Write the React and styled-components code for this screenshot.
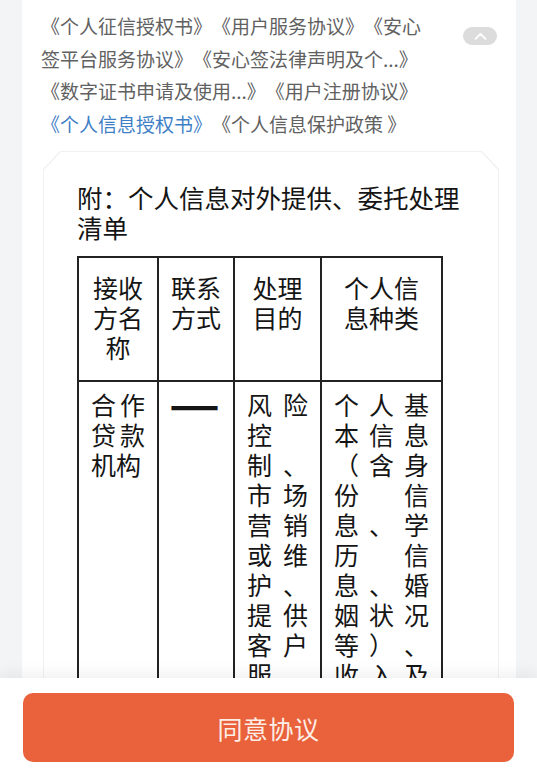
import React from 'react';
import styled, { createGlobalStyle } from 'styled-components';

const GlobalStyle = createGlobalStyle`
  html, body { margin: 0; padding: 0; height: 100%; }
  body {
    background: #f3f4f6;
    font-family: "Noto Sans CJK SC", "Noto Sans", sans-serif;
    overflow: hidden;
    text-spacing-trim: space-all;
  }
  #root { height: 100%; }
`;

const Page = styled.div`
  height: 100vh;
  display: flex;
  flex-direction: column;
`;

const Scroll = styled.main`
  flex: 1;
  min-height: 0;
  overflow: hidden;
  padding: 0 21px 0 22px;
`;

const Card = styled.section`
  background: #fff;
  min-height: 100%;
  box-sizing: border-box;
  padding: 10px 17px 0 19px;
`;

const TopRow = styled.div`
  display: flex;
  justify-content: space-between;
  align-items: flex-start;
  padding-right: 2px;
`;

const LinkText = styled.p`
  margin: 0;
  width: 392px;
  font-size: 19px;
  line-height: 32.5px;
  color: #616161;
  text-spacing-trim: space-all;
`;

const DocLink = styled.span`
  color: ${p => (p.$active ? '#3f7fc6' : '#616161')};
  cursor: pointer;
`;

const CollapseButton = styled.button`
  margin-top: 17px;
  width: 34px;
  height: 18px;
  border: none;
  border-radius: 9px;
  background: #dcdcdc;
  display: flex;
  align-items: center;
  justify-content: center;
  padding: 0;
  cursor: pointer;
`;

const chamfer = `polygon(17px 0, calc(100% - 17px) 0, 100% 18px, 100% 100%, 0 100%, 0 18px)`;

const Frame = styled.div`
  margin: 11px 0 0 2px;
  background: #f1f1f1;
  padding: 1px 1px 0 1px;
  clip-path: ${chamfer};
`;

const FrameInner = styled.div`
  background: #fff;
  clip-path: ${chamfer};
  padding: 30px 33px 40px 33px;
`;

const Title = styled.h2`
  margin: 0 0 15px 0;
  font-size: 25.5px;
  line-height: 29.5px;
  font-weight: 400;
  color: #151515;
`;

const Table = styled.table`
  width: 364px;
  table-layout: fixed;
  border-collapse: collapse;
  color: #151515;
`;

const Col = styled.col`
  width: ${p => p.$w}px;
`;

const HeadCell = styled.th`
  border: 2px solid #222;
  font-weight: 400;
  font-size: 25px;
  line-height: 30px;
  text-align: center;
  vertical-align: top;
  padding: 14px 12px 18px;
`;

const BodyCell = styled.td`
  border: 2px solid #222;
  font-size: 25px;
  line-height: 30px;
  text-align: justify;
  vertical-align: top;
  padding: 7px 12px 20px;
  text-spacing-trim: space-all;
`;

const Dash = styled.span`
  display: inline-block;
  font-weight: 700;
  transform: translate(-1px, -3px) scale(1.15, 1.8);
  transform-origin: left center;
`;

const Footer = styled.footer`
  position: relative;
  z-index: 1;
  background: #fff;
  padding: 15px 23px 8px;
  box-shadow: 0 -5px 14px rgba(0, 0, 0, 0.06);
`;

const AgreeButton = styled.button`
  width: 100%;
  height: 69px;
  border: none;
  border-radius: 10px;
  background: #e9623b;
  color: #fdeee7;
  font-family: "Noto Sans CJK SC", "Noto Sans", sans-serif;
  font-size: 25px;
  letter-spacing: 0.5px;
  cursor: pointer;
`;

const links = [
  { t: '《个人征信授权书》' },
  { t: '《用户服务协议》' },
  { t: '《安心签平台服务协议》' },
  { t: '《安心签法律声明及个...》' },
  { t: '《数字证书申请及使用...》' },
  { t: '《用户注册协议》' },
  { t: '《个人信息授权书》', active: true },
  { t: '《个人信息保护政策 》' },
];

export default function App() {
  return (
    <Page>
      <GlobalStyle />
      <Scroll>
        <Card>
          <TopRow>
            <LinkText>
              {links.map(l => (
                <DocLink key={l.t} $active={l.active}>
                  {l.t}
                </DocLink>
              ))}
            </LinkText>
            <CollapseButton aria-label="收起">
              <svg width="13" height="8" viewBox="0 0 13 8" fill="none">
                <path d="M1.5 6.8 L6.5 1.8 L11.5 6.8" stroke="#fff" strokeWidth="1.8" strokeLinecap="round" strokeLinejoin="round" />
              </svg>
            </CollapseButton>
          </TopRow>
          <Frame>
            <FrameInner>
              <Title>附：个人信息对外提供、委托处理清单</Title>
              <Table>
                <colgroup>
                  <Col $w={80} />
                  <Col $w={76} />
                  <Col $w={87} />
                  <Col $w={121} />
                </colgroup>
                <thead>
                  <tr>
                    <HeadCell>接收方名称</HeadCell>
                    <HeadCell>联系方式</HeadCell>
                    <HeadCell>处理目的</HeadCell>
                    <HeadCell>个人信息种类</HeadCell>
                  </tr>
                </thead>
                <tbody>
                  <tr>
                    <BodyCell>合作贷款机构</BodyCell>
                    <BodyCell><Dash>——</Dash></BodyCell>
                    <BodyCell>风险控制、市场营销或维护、提供客户服务、贷后管理</BodyCell>
                    <BodyCell>个人基本信息（含身份信息、学历信息、婚姻状况等）、收入及资产信息、联系方式</BodyCell>
                  </tr>
                </tbody>
              </Table>
            </FrameInner>
          </Frame>
        </Card>
      </Scroll>
      <Footer>
        <AgreeButton>同意协议</AgreeButton>
      </Footer>
    </Page>
  );
}
